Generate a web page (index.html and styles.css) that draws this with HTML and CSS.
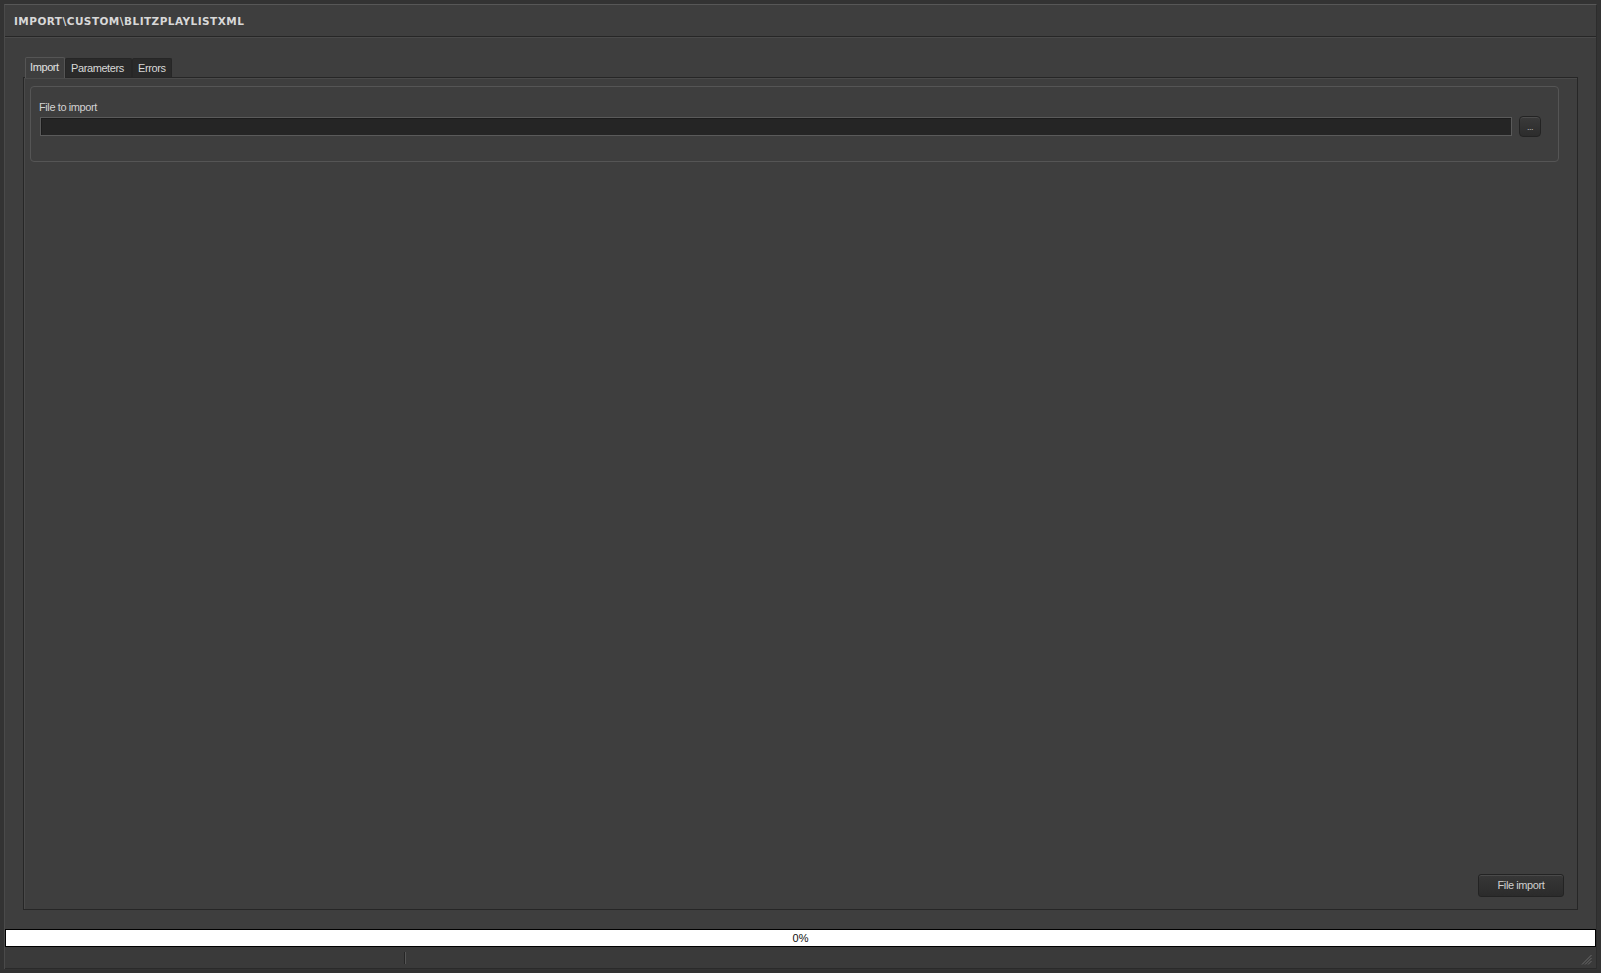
FILE: index.html
```html
<!DOCTYPE html>
<html>
<head>
<meta charset="utf-8">
<link rel="stylesheet" href="styles.css">
</head>
<body>
<div class="window">
  <div class="titlebar">IMPORT\CUSTOM\BLITZPLAYLISTXML</div>
  <div class="content">
    <div class="tabwidget">
      <div class="tabbar">
        <div class="tab active">Import</div>
        <div class="tab">Parameters</div>
        <div class="tab">Errors</div>
      </div>
      <div class="pane">
        <div class="group">
          <div class="label">File to import</div>
          <div class="row">
            <div class="input"></div>
            <div class="browse">...</div>
          </div>
        </div>
        <div class="spacer"></div>
        <div class="actions"><div class="btn">File import</div></div>
      </div>
    </div>
  </div>
  <div class="progress">0%</div>
  <div class="statusbar">
    <div class="sb-cell first"></div>
    <div class="sb-cell rest"></div>
    <svg class="grip" width="12" height="12" viewBox="0 0 12 12">
      <g stroke="#6a6a6a" stroke-width="1">
        <line x1="11.5" y1="2" x2="2" y2="11.5"/>
        <line x1="11.5" y1="5" x2="5" y2="11.5"/>
        <line x1="11.5" y1="8" x2="8" y2="11.5"/>
      </g>
    </svg>
  </div>
</div>
</body>
</html>
```
FILE: styles.css
```css
html, body {
  margin: 0;
  padding: 0;
  background: #333333;
  width: 1601px;
  height: 973px;
  overflow: hidden;
  font-family: "Liberation Sans", Arial, sans-serif;
}
.window {
  box-sizing: border-box;
  margin: 4px 4px 0 4px;
  height: 965px;
  background: #3e3e3e;
  border-top: 1px solid #575757;
  border-left: 1px solid #4a4a4a;
  border-right: 1px solid #2c2c2c;
  display: flex;
  flex-direction: column;
}
.titlebar {
  box-sizing: border-box;
  height: 32px;
  flex: 0 0 32px;
  padding-left: 9px;
  padding-top: 1px;
  line-height: 30px;
  font-family: "DejaVu Sans", sans-serif;
  font-weight: bold;
  font-size: 10.5px;
  letter-spacing: 0.45px;
  color: #d8d8d8;
  border-bottom: 1px solid #262626;
}
.content {
  flex: 1 1 auto;
  border-top: 1px solid #4a4a4a;
  padding: 19px 18px 19px 18px;
  display: flex;
  flex-direction: column;
  min-height: 0;
}
.tabwidget {
  flex: 1 1 auto;
  display: flex;
  flex-direction: column;
  min-height: 0;
}
.tabbar {
  display: flex;
  padding-left: 2px;
  height: 20px;
  flex: 0 0 20px;
  align-items: flex-end;
}
.tab {
  box-sizing: border-box;
  height: 19px;
  padding: 0 5px;
  font-size: 11px;
  letter-spacing: -0.4px;
  line-height: 19px;
  color: #d8d8d8;
  background: #2a2a2a;
  border: 1px solid #262626;
  border-bottom: none;
  border-radius: 2px 2px 0 0;
}
.tab.active {
  height: 21px;
  margin-bottom: -1px;
  line-height: 18px;
  padding: 0 4px;
  width: 40px;
  background: #3e3e3e;
  border: 1px solid #555555;
  border-bottom: none;
  color: #e0e0e0;
  position: relative;
  z-index: 1;
}
.tab:nth-child(2) { width: 67px; }
.tab:nth-child(3) { width: 40px; }
.pane {
  flex: 1 1 auto;
  border: 1px solid #262626;
  box-shadow: inset 1px 1px 0 #4a4a4a;
  display: flex;
  flex-direction: column;
  padding: 8px 18px 12px 6px;
}
.group {
  border: 1px solid #555555;
  border-radius: 4px;
  padding: 13px 17px 24px 8px;
}
.label {
  font-size: 11px;
  letter-spacing: -0.4px;
  color: #d2d2d2;
  line-height: 14px;
  height: 14px;
  margin-bottom: 2px;
}
.row {
  display: flex;
  align-items: center;
  gap: 7px;
}
.input {
  flex: 1 1 auto;
  box-sizing: border-box;
  height: 19px;
  margin-left: 1px;
  background: #252525;
  border: 1px solid #5a5a5a;
  box-shadow: inset 1px 1px 0 #1c1c1c;
}
.browse {
  box-sizing: border-box;
  width: 22px;
  height: 21px;
  border: 1px solid #232323;
  border-radius: 4px;
  background: linear-gradient(#3a3a3a, #2c2c2c);
  box-shadow: inset 0 1px 0 #4c4c4c;
  color: #bdbdbd;
  font-size: 9px;
  text-align: center;
  line-height: 20px;
  letter-spacing: -0.5px;
}
.spacer { flex: 1 1 auto; }
.actions {
  display: flex;
  justify-content: flex-end;
  margin-right: -5px;
}
.btn {
  box-sizing: border-box;
  width: 86px;
  height: 23px;
  border: 1px solid #232323;
  border-radius: 3px;
  background: linear-gradient(#373737, #2b2b2b);
  box-shadow: inset 0 1px 0 #4a4a4a;
  color: #cfcfcf;
  font-size: 11px;
  letter-spacing: -0.4px;
  line-height: 21px;
  text-align: center;
}
.progress {
  flex: 0 0 18px;
  height: 18px;
  box-sizing: border-box;
  background: #ffffff;
  border: 1px solid #000000;
  font-size: 11px;
  color: #111111;
  text-align: center;
  line-height: 16px;
}
.statusbar {
  box-sizing: border-box;
  flex: 0 0 22px;
  height: 22px;
  display: flex;
  align-items: stretch;
  background: #3a3a3a;
  border-bottom: 1px solid #2a2a2a;
  position: relative;
}
.sb-cell.first {
  width: 399px;
  border-right: 1px solid #262626;
  box-shadow: 1px 0 0 #555555;
  margin: 5px 0 4px 0;
}
.sb-cell.rest { flex: 1 1 auto; }
.grip {
  position: absolute;
  right: 4px;
  bottom: 3px;
}
```
